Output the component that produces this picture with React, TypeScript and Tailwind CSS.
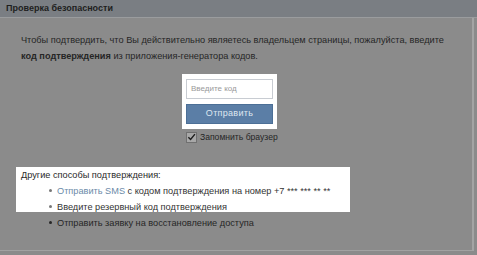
export default function App() {
  return (
    <div
      className="relative w-[477px] h-[255px] overflow-hidden bg-[#8b8b8b] text-[#232323]"
      style={{ fontFamily: '"Liberation Sans", Arial, sans-serif' }}
    >
      {/* header */}
      <div className="h-[18px] bg-[#7a7e83] border-b border-[#9a9c9e] pl-[6px] flex items-center">
        <span className="text-[9px] font-bold text-[#1e1e1e]">Проверка безопасности</span>
      </div>

      <div className="flex">
        <div className="w-[472px] h-[233px] border-b border-[#a2a2a2] pt-[14px]">
          <p className="pl-[21px] pr-[20px] text-[9.2px] leading-[16px] text-[#262626]">
            Чтобы подтвердить, что Вы действительно являетесь владельцем страницы, пожалуйста, введите{' '}
            <b>код подтверждения</b> из приложения-генератора кодов.
          </p>

          {/* code form */}
          <div className="mt-[10px] ml-[182px] w-[95px] bg-white px-[4px] py-[5px] flex flex-col gap-[5px]">
            <div className="h-[20px] border border-[#c8ccd2] bg-white flex items-center pl-[4px] text-[8px] text-[#9a9a9a]">
              Введите код
            </div>
            <div className="h-[20px] bg-[#5b7ea6] border border-[#4c6f96] flex items-center justify-center text-[9px] tracking-[0.3px] text-[#dfe7f0]">
              Отправить
            </div>
          </div>
          <div className="ml-[186px] mt-[2px] flex items-center gap-[3px] text-[8.6px] text-[#262626]">
            <span className="w-[11px] h-[11px] bg-[#a8a8a8] border border-[#707070] flex items-center justify-center">
              <svg width="10" height="10" viewBox="0 0 10 10">
                <path d="M1.5 5.2 L4 7.8 L8.8 1.8" stroke="#1e1e1e" strokeWidth="1.6" fill="none" />
              </svg>
            </span>
            Запомнить браузер
          </div>

          {/* other methods */}
          <div className="mt-[23px] ml-[16px] w-[334px] h-[45px] bg-white pl-[5px] text-[9.2px] leading-[16px] whitespace-nowrap">
            <div className="text-[#2a2a2a]">Другие способы подтверждения:</div>
            <ul className="pl-[28px]">
              <li className="flex items-center gap-[5px]">
                <span className="w-[3px] h-[3px] rounded-full bg-[#777]" />
                <span>
                  <span className="text-[#6b8aa8]">Отправить SMS</span>
                  <span className="text-[#333]"> с кодом подтверждения на номер +7 *** *** ** **</span>
                </span>
              </li>
              <li className="flex items-center gap-[5px] text-[#333]">
                <span className="w-[3px] h-[3px] rounded-full bg-[#777]" />
                Введите резервный код подтверждения
              </li>
            </ul>
          </div>
          <div className="ml-[49px] mt-[3px] flex items-center gap-[5px] text-[9.2px] leading-[16px] text-[#262626] whitespace-nowrap">
            <span className="w-[3px] h-[3px] rounded-full bg-[#262626]" />
            Отправить заявку на восстановление доступа
          </div>
        </div>
        <div className="w-[2px] h-[233px] bg-[#a4a4a4]" />
      </div>
    </div>
  );
}
